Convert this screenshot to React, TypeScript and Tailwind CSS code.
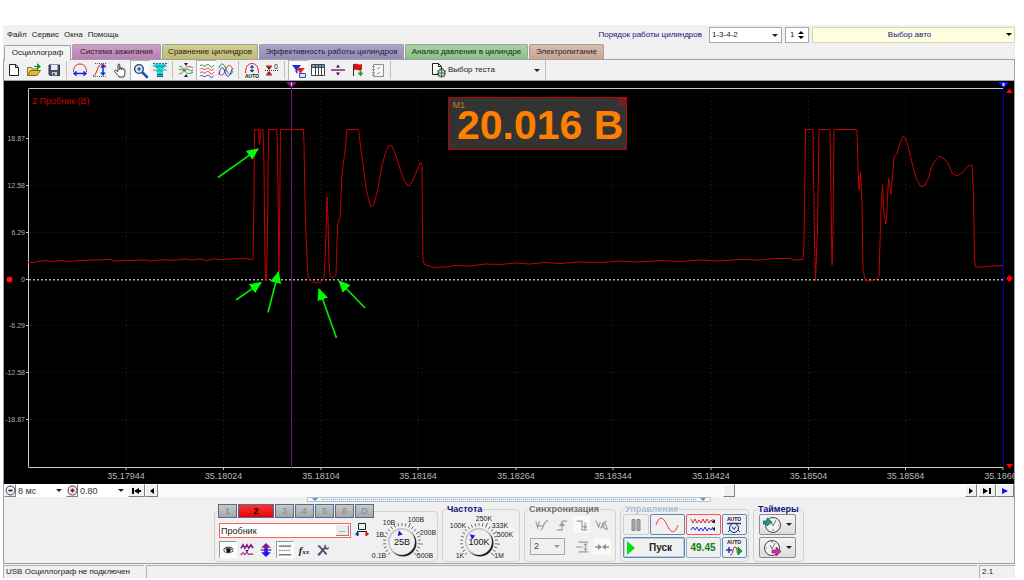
import type { ReactNode } from "react"
import clsx from "clsx"

const tabs = [
    { title: "Осциллограф", style: "w-[67px] bg-[#f4f4f4] h-4 -mb-px" },
    { title: "Система зажигания", style: "w-[89px] bg-linear-to-b from-[#cfa0ca] to-[#bb7db4]" },
    { title: "Сравнение цилиндров", style: "w-[96px] bg-linear-to-b from-[#d0ce94] to-[#bfbc70]" },
    { title: "Эффективность работы цилиндров", style: "w-[145px] bg-linear-to-b from-[#aaa6cb] to-[#918bb9]" },
    { title: "Анализ давления в цилиндре", style: "w-[123px] bg-linear-to-b from-[#a8d3a4] to-[#88c184]" },
    { title: "Электропитание", style: "w-[75px] bg-linear-to-b from-[#d8bcae] to-[#c9a693]" },
]

const Icon = ({ children, className = "w-4 h-4" }: { children: ReactNode; className?: string }) => (
    <svg viewBox="0 0 16 16" className={className} fill="none" aria-hidden="true">
        {children}
    </svg>
)

const Caret = ({ className = "" }: { className?: string }) => (
    <svg viewBox="0 0 6 3" className={clsx("w-[6px] h-[3px] pointer-events-none", className)} aria-hidden="true">
        <path d="M0 0h6L3 3z" fill="currentColor" />
    </svg>
)

const toolGroups: { label: string; pressed?: boolean; icon: ReactNode }[][] = [
    [
        { label: "Новый", icon: <path d="M3.500 2.500h6l3 3v8h-9zM9.500 2.500v3h3" stroke="#222" fill="#fff" /> },
        {
            label: "Открыть",
            icon: (
                <>
                    <path d="M1.500 13V5.500h4l1 1.500h5v2" fill="#f2d77c" stroke="#8a7420" />
                    <path d="M1.500 13.500l3-5h10l-3.500 5z" fill="#e0b93c" stroke="#7d6a1c" />
                    <path d="M11 1l4 3.500L11 8z" fill="#0b9a1f" />
                    <path d="M8 4.500h3" stroke="#0b9a1f" />
                </>
            ),
        },
        {
            label: "Сохранить",
            icon: (
                <>
                    <path d="M3 3h10.500v10.500H4L3 12.500z" fill="#4b5064" stroke="#2f3344" />
                    <path d="M5 3h6.500v5H5z" fill="#e8ecf4" />
                    <path d="M6 10h5v3.500H6z" fill="#c8ccd6" />
                    <path d="M7 11h1.500v2.500H7z" fill="#333" />
                </>
            ),
        },
    ],
    [
        {
            label: "Период",
            icon: (
                <>
                    <path d="M1.500 10C1.500 5 4 2 8 2s6.500 3 6.500 8" stroke="#e02020" />
                    <path d="M2 11.500h12" stroke="#0b2fd8" strokeWidth="1.500" />
                    <path d="M1 11.500l3.500-3v6zM15 11.500l-3.500-3v6z" fill="#0b2fd8" />
                </>
            ),
        },
        {
            label: "Амплитуда",
            icon: (
                <>
                    <path d="M1 14c4 0 4-12 9-12 2 0 3 1 4 3" stroke="#e02020" />
                    <path d="M3 1.500h12M1 14.500h14" stroke="#555" strokeDasharray="1 1" />
                    <path d="M11 3v10" stroke="#0b2fd8" strokeWidth="1.500" />
                    <path d="M11 2l3 3.500H8zM11 14l3-3.500H8z" fill="#0b2fd8" />
                </>
            ),
        },
        {
            label: "Рука",
            icon: (
                <path
                    d="M6 9.500V3c0-1.300 1.800-1.300 1.800 0v4.500V6.300c0-1 1.700-1 1.700.2v1-.8c0-1 1.700-1 1.700.3v.8c0-1 1.700-.9 1.700.3V11c0 2-1 2.500-1 4H7c0-1.500-3.500-3.500-4.300-5.500-.4-1.200.9-1.700 1.700-.8z"
                    fill="#fff"
                    stroke="#222"
                    strokeWidth=".9"
                />
            ),
        },
        {
            label: "Лупа",
            pressed: true,
            icon: (
                <>
                    <path d="M9.500 9.500l4.500 4.500" stroke="#2450b0" strokeWidth="2.600" strokeLinecap="round" />
                    <circle cx="6" cy="6" r="4.300" fill="#cfe9f5" stroke="#283c66" strokeWidth="1.300" />
                    <path d="M4 6h4M6 4v4" stroke="#0d3f8c" />
                </>
            ),
        },
        {
            label: "Фильтр",
            icon: (
                <>
                    <path d="M2 2h12l-3 6v6H5V8z" fill="#18dcec" />
                    <path d="M1 4.500c2-2 3 2 5 0s3 2 5 0 3 0 4 0" stroke="#0c6d6a" />
                    <path d="M1 8.500c2-2 3 2 5 0s3 2 5 0 3 0 4 0" stroke="#2c9a5a" />
                    <path d="M1 1.500h14" stroke="#0a6f88" strokeDasharray="2 1" />
                    <path d="M5 12.500h6M5 14.500h6" stroke="#0a5070" />
                </>
            ),
        },
    ],
    [
        {
            label: "Совместить",
            icon: (
                <>
                    <path d="M1 5c2-2 3 0 5 3s4 5 9 2" stroke="#1c9440" />
                    <path d="M1 11c2 2 3 0 5-3s4-5 9-2" stroke="#d23a3a" />
                    <path d="M1 8c3-3 4 3 7 0s4 3 7 0" stroke="#1c9440" />
                    <path d="M6 1h4L8 4zM6 15h4l-2-3z" fill="#222" />
                </>
            ),
        },
        {
            label: "Раздельно",
            pressed: true,
            icon: (
                <>
                    <path d="M1 3c2-3 3 1 5 0s3-3 5 0 3 0 4-1" stroke="#14903c" />
                    <path d="M1 6.500c2-3 3 1 5 0s3-2 5 0 3 0 4-1" stroke="#e03030" />
                    <path d="M1 10c2-3 3 1 5 0s3-3 5 0 3 0 4-1" stroke="#e03030" />
                    <path d="M1 13.500c2-3 3 1 5 0s3-2 5 0 3 0 4-1" stroke="#1d36d0" />
                </>
            ),
        },
        {
            label: "Наложить",
            icon: (
                <>
                    <path d="M1 6c2-6 5-5 7 1s5 7 7 2" stroke="#14903c" />
                    <path d="M1 10c2 5 4 4 6-1s5-9 8-1" stroke="#e03030" />
                    <path d="M1 13c1-8 4-10 6-3s5 5 7-3" stroke="#1d36d0" />
                </>
            ),
        },
    ],
    [
        {
            label: "Авто",
            icon: (
                <>
                    <path d="M1.500 11C1.500 5 4 1.500 8 1.500S14.500 5 14.500 11" stroke="#e02020" />
                    <path d="M8 4v6" stroke="#123c8e" />
                    <path d="M8 3l2.500 2.500h-5zM8 10.500L10.500 8h-5z" fill="#123c8e" />
                    <text x="8" y="15.500" textAnchor="middle" fontSize="5" fontWeight="bold" fill="#111">
                        AUTO
                    </text>
                </>
            ),
        },
        {
            label: "Ноль",
            icon: (
                <>
                    <path d="M1 8.500h14" stroke="#333" strokeDasharray="1 1" />
                    <path d="M2 4.500h6L5 8zM2 12.500h6L5 9z" fill="#a01010" />
                    <path d="M2 4h6M2 13h6" stroke="#a01010" />
                    <text x="10" y="7" fontSize="7" fill="#222">
                        0
                    </text>
                </>
            ),
        },
    ],
    [
        {
            label: "Фильтр каналов",
            pressed: true,
            icon: (
                <>
                    <path d="M1 2h9L6.500 6.500V11L4.500 9V6.500z" fill="#1b2be0" />
                    <path d="M5 5h9l-3.500 4v4.500L8.500 12V9z" fill="#e01c24" />
                    <path d="M8.500 10.500h6v4h-6z" fill="#dfe6ff" stroke="#3949ab" />
                </>
            ),
        },
        {
            label: "Таблица",
            icon: (
                <>
                    <path d="M1.500 2.500h13v11h-13z" fill="#fff" stroke="#444" />
                    <path d="M2 3h12v2H2z" fill="#6ea0d4" />
                    <path d="M2 5.500h12M5.500 3v10M8.500 3v10M11.500 3v10" stroke="#444" />
                </>
            ),
        },
        {
            label: "Линия",
            icon: (
                <>
                    <path d="M1 8h14" stroke="#8b1a8b" strokeWidth="1.500" />
                    <path d="M6 5.500h4l-2-3zM6 10.500h4l-2 3z" fill="#222" />
                </>
            ),
        },
        {
            label: "Метка",
            icon: (
                <>
                    <path d="M3.500 2v12" stroke="#333" />
                    <path d="M4 2c3-1 4 1.500 8 0v6c-4 1.500-5-1-8 0z" fill="#d01418" />
                    <path d="M8 11.500h5M10.500 9v5" stroke="#12962a" strokeWidth="1.600" />
                </>
            ),
        },
        {
            label: "Отчёт",
            icon: (
                <>
                    <path d="M3.500 2.500h10v12h-10z" fill="#f6f6f6" stroke="#8d8d8d" />
                    <path d="M2 4.500h3M2 7.500h3M2 10.500h3M2 13h3M7 6l1 1 2-2M7 11l1 1 2-2" stroke="#9a9a9a" />
                </>
            ),
        },
    ],
]

const gridX = [126, 223.5, 321, 418, 516, 613, 711, 808.5, 905.5, 1003]
const timeLabels = ["35.17944", "35.18024", "35.18104", "35.18184", "35.18264", "35.18344", "35.18424", "35.18504", "35.18584", "35.18664"]
const levels = [
    { y: 139, label: "18.87" },
    { y: 186, label: "12.58" },
    { y: 233, label: "6.29" },
    { y: 280, label: "0" },
    { y: 326, label: "-6.29" },
    { y: 373, label: "-12.58" },
    { y: 420, label: "-18.87" },
]

const wave =
    "28,262.500 34,262.500 36,261.500 46,260.500 51,261.500 62,260.500 68,261.500 80,260.500 110,259.500 115,261 125,260.500 145,260 150,261 165,259.500 172,260.500 185,259 192,260 200,259 207,260.500 213,259 222,259.500 245,258.500 250,259.500 253,259.500 254,195 254.500,129.500 258.500,129.500 259.500,144.500 261,130 263,129.500 264,166 265,260 265.500,280.500 266.500,278 267.500,230 268.500,129.500 276.500,129.500 277.500,145 278.500,235 279,272 279.500,235 280.500,129.500 303.500,129.500 304,143 305,200 306,236 308,276 310,280 313,282 317,283 321,282 324,278 325.500,250 326.500,215 327,197 328,217 329,262 330,276 333,278 336,275 337.500,225 340,217 342,175 343,165 345,152 347,129.500 358.500,129.500 361,150 364,172 366,188 369,201 371,207 374,204 378,188 382,165 386,151 389,145.500 392,146 396,156 402,175 406,184 409,186 413,180 418,168 420.500,162 422,165 422.500,225 423,261 425,265 430,266 434,268 440,267 446,267 455,265.500 470,266 485,264 500,264.500 515,263 530,264 545,262.500 560,263.500 580,262 600,262.500 620,261 640,262 660,260.500 680,261.500 700,260 720,261 740,259.500 760,260 775,258.500 790,258.500 793,260 803,259.500 804,243 805.500,129.500 813,129.500 814.500,242 815.500,281 817.500,228 819,129.500 830,129.500 831.500,230 832,265 833,230 834,129.500 857,129.500 858,167 859,190 860.500,172 862,203 863,270 865,279 869,281 875,280 879,277 880,242 881,210 882.500,184 884,215 886,224 887,210 888.500,178 891,195 893,170 894,157 897,154 900,143 903,136 905,138 908,146 912,163 916,178 921,187 925,185 929,177 931,168 935,161 939,156 943,158 948,163 952,173 957,176 963,172 968,166 972,165 973.500,195 974.500,260 975.500,267 982,267 992,266 1003,265.500"

const arrows = [
    [218, 177.5, 258, 149],
    [236, 300, 261, 282.5],
    [268, 312.5, 278.5, 272],
    [336.5, 338, 319, 289],
    [365, 308, 339, 281],
]

const Scope = () => (
    <div className="relative bg-black border-x border-[#a0a0a0]">
        <svg viewBox="4 81 1010 403" className="block w-full h-auto" role="img" aria-label="Осциллограмма">
            <defs>
                <marker id="tip" markerUnits="userSpaceOnUse" markerWidth="12" markerHeight="12" refX="11" refY="5.500" orient="auto">
                    <path d="M0 0L12 5.500L0 11z" fill="#00ff00" />
                </marker>
            </defs>
            <g stroke="#26260c" strokeDasharray="1 3">
                {gridX.slice(0, 9).map((x) => (
                    <line key={x} x1={x} x2={x} y1="92" y2="466" />
                ))}
                {levels.map((l) => (
                    <line key={l.y} x1="30" x2="1002" y1={l.y - 0.5} y2={l.y - 0.5} />
                ))}
            </g>
            <path d="M28.500 467.500V88.500H1003M28.500 467.500H1003" stroke="#c8c8c8" fill="none" />
            <line x1="29" x2="1003" y1="279.750" y2="279.750" stroke="#a8a8a8" strokeWidth="1.500" strokeDasharray="2 2" />
            <g fontSize="7" fill="#b0b0b0">
                {levels.map((l) => (
                    <text key={l.label} x="25" y={l.y + 2} textAnchor="end">
                        {l.label}
                    </text>
                ))}
            </g>
            <g fontSize="9" fill="#b8b8b8">
                {timeLabels.map((t, i) => (
                    <text key={t} x={gridX[i]} y="479" textAnchor="middle">
                        {t}
                    </text>
                ))}
            </g>
            <g stroke="#c8c8c8">
                {levels.map((l) => (
                    <line key={l.y} x1="26" x2="28" y1={l.y - 0.5} y2={l.y - 0.5} />
                ))}
                {gridX.map((x) => (
                    <line key={x} x1={x} x2={x} y1="468" y2="470" />
                ))}
            </g>
            <text x="32" y="104" fontSize="9" fill="#d00000">
                2 Пробник (В)
            </text>
            <polyline points={wave} fill="none" stroke="#c40000" strokeLinejoin="round" />
            <path d="M291.500 84V468" stroke="#6a1a6e" />
            <path d="M286 82h11l-5.500 6z" fill="#8a108c" />
            <path d="M291.500 82.500v3" stroke="#fff" />
            <path d="M1003.500 84V468" stroke="#0000c0" />
            <path d="M998 82h11l-5.500 6z" fill="#1414ff" />
            <path d="M1002.500 83h2v3h-2z" fill="#c8d0ff" />
            <path d="M1006 93l3.500-4.500L1013 93zM1006 464l3.500 4.500L1013 464zM1009.500 275l3.500 3.500-3.500 3.500-3.500-3.500z" fill="#ff0000" />
            <circle cx="9.500" cy="279.500" r="3" fill="#ff1010" />
            {arrows.map(([x1, y1, x2, y2]) => (
                <line key={x1} x1={x1} y1={y1} x2={x2} y2={y2} stroke="#00e800" strokeWidth="1.700" markerEnd="url(#tip)" />
            ))}
        </svg>
        {/* floating meter window */}
        <div className="absolute left-[44%] top-4 w-[179px] h-[53px] bg-[#333] border border-[#c00000] text-[#ff8000]">
            <span className="absolute left-[3px] top-[2px] text-[9px] leading-[10px] text-[#c87820]">М1</span>
            <p className="h-full pr-[3px] text-right text-[41px] leading-[54px] font-bold whitespace-nowrap">20.016 В</p>
            <button aria-label="Закрыть" className="absolute right-0 top-0 w-[7px] h-[7px] text-[#e00000]">
                <svg viewBox="0 0 7 7" className="w-[7px] h-[7px]" fill="none" stroke="currentColor">
                    <path d="M.5.500h6v6h-6zM1 1l5 5M6 1L1 6" strokeWidth=".8" />
                </svg>
            </button>
        </div>
    </div>
)

type Mark = { x: number; y: number; t: string }

const Knob = ({ value, marks, angle, className }: { value: string; marks: Mark[]; angle: number; className: string }) => (
    <svg viewBox="-34 -28 68 46" className={className} role="img" aria-label={value}>
        {Array.from({ length: 23 }, (_, i) => i * 12 - 132).map((a) => (
            <line key={a} y1="-16" y2={a % 36 === 24 ? "-21" : "-19"} transform={`rotate(${a})`} stroke="#555" strokeWidth=".8" />
        ))}
        <circle cx="1" cy="1" r="13.500" fill="#222" />
        <circle cx="-.5" cy="-.5" r="13.500" fill="#c0c0c0" />
        <circle r="12.500" fill="#f0f0f0" />
        <path d="M-2.500-7L0-12 2.500-7z" fill="#1010f0" transform={`rotate(${angle})`} />
        <text y="3" textAnchor="middle" fontSize="9" fill="#111">
            {value}
        </text>
        {marks.map((m) => (
            <text key={m.t} x={m.x} y={m.y} textAnchor="middle" fontSize="7" fill="#222">
                {m.t}
            </text>
        ))}
    </svg>
)

const voltMarks: Mark[] = [
    { x: -23, y: 16, t: "0.1В" },
    { x: -22, y: -5, t: "1В" },
    { x: -13, y: -17, t: "10В" },
    { x: 14, y: -20, t: "100В" },
    { x: 26, y: -7, t: "200В" },
    { x: 23, y: 16, t: "500В" },
]

const freqMarks: Mark[] = [
    { x: -19, y: 16, t: "1K" },
    { x: -21, y: -14, t: "100K" },
    { x: 5, y: -21, t: "250K" },
    { x: 21, y: -14, t: "333K" },
    { x: 26, y: -5, t: "500K" },
    { x: 20, y: 16, t: "1M" },
]

const Group = ({ title, color, className, children }: { title: string; color: string; className: string; children: ReactNode }) => (
    <fieldset className={clsx("shrink-0 border border-[#d2d2d2] rounded-sm", className)}>
        <legend className={clsx("ml-1 text-[9px] leading-[10px] font-bold", color)}>{title}</legend>
        {children}
    </fieldset>
)

const channelTools: { label: string; pressed?: boolean; icon: ReactNode }[] = [
    {
        label: "Видимость",
        pressed: true,
        icon: (
            <>
                <path d="M3 9c3-4 7-4 11 0-4 3-8 3-11 0z" fill="#fff" stroke="#333" />
                <circle cx="8.500" cy="8.500" r="2.500" fill="#111" />
                <path d="M3 7c3-3 8-3 11 0" stroke="#111" />
            </>
        ),
    },
    {
        label: "Сглаживание",
        icon: (
            <>
                <path d="M1 6l2.500-4 2 4 2.500-4 2 4 2.500-4L15 6" stroke="#8a1a8a" strokeWidth="1.800" />
                <path d="M6 8h4l-2 2.500z" fill="#222" />
                <path d="M1 14c2-5 3-2 4-1s2-4 4-1 3-1 6 1" stroke="#8a1a8a" strokeWidth="1.300" />
            </>
        ),
    },
    {
        label: "Инверсия",
        icon: (
            <>
                <path d="M8 0l5.500 5.500H10V8H6V5.500H2.500z" fill="#8a1a8a" />
                <path d="M8 16l5.500-5.500H10V8H6v2.500H2.500z" fill="#1414f0" />
                <path d="M2 8h12" stroke="#4a18c0" strokeWidth="1.500" />
            </>
        ),
    },
    {
        label: "Границы",
        pressed: true,
        icon: (
            <>
                <path d="M1 3.500h14M1 13.500h14" stroke="#222" />
                <path d="M1 8.500h14" stroke="#444" strokeDasharray="1 1" />
            </>
        ),
    },
    {
        label: "Функция",
        icon: (
            <text x="2" y="12" fontSize="12" fontStyle="italic" fontWeight="bold" fontFamily="Liberation Serif, serif" fill="#111">
                f<tspan fontSize="8">xx</tspan>
            </text>
        ),
    },
    {
        label: "Настройки",
        icon: (
            <>
                <path d="M3 13.500l7-8M4 4l8 9" stroke="#444a58" strokeWidth="2" />
                <path d="M9 5c0-3 2-3 3-3l-1 2 1.500 1.500L15 4.500c0 2-2 4-4 3M2 2l3 1 1 3-3-1z" fill="#555c6c" />
                <path d="M2.500 14l3-3" stroke="#3a62b4" strokeWidth="2.500" />
            </>
        ),
    },
]

const syncIcons = [
    { label: "Автосинхронизация", d: "M1 4l2 7 2-7M6 14c4 0 3-11 9-11M4 9h6", pressed: false },
    { label: "По фронту", d: "M2 13.500h6V3.500h6M5 8.500h6M8 6l-3 3M8 6l3 3", pressed: false },
    { label: "По спаду", d: "M2 3.500h6v10h6M11.500 5v6M9.500 9l2 3 2-3", pressed: true },
    { label: "Вручную", d: "M1 3l3 7 2-5M7 12L13 3M8 7l2-2 3 4 1 4-3-1zM5 10h5", pressed: false },
]

const plainButton = "flex items-center justify-center rounded-xs border h-[21px]"

const Controls = () => (
    <div className="flex justify-center gap-1">
        <fieldset className="shrink-0 w-[224px] h-[58px] border border-[#d2d2d2] rounded-sm">
            <legend className="ml-[3px] flex gap-px">
                {["1", "2", "3", "4", "5", "6", "D"].map((c) => (
                    <button
                        key={c}
                        className={clsx(
                            "h-[14px] border border-[#4e7192] text-[9px] leading-3",
                            c === "2"
                                ? "w-[36px] bg-linear-to-b from-[#ff3030] to-[#e00000] text-black font-bold"
                                : "w-[19px] bg-linear-to-b from-[#c8c8c8] to-[#a8a8a8] text-[#858585]"
                        )}
                    >
                        {c}
                    </button>
                ))}
            </legend>
            <div className="flex items-start -mt-1">
                <div className="flex flex-col pl-1 pt-[9px] gap-[3px]">
                    <div className="flex items-center gap-[3px]">
                        <div className="flex w-[132px] h-[15px] border border-[#ff6060] bg-white">
                            <input aria-label="Название канала" defaultValue="Пробник" className="min-w-0 flex-1 pl-px text-[9px] leading-3 outline-none" />
                            <button aria-label="Обзор" className="w-[13px] m-px bg-[#ececec] border-r border-b border-[#888] text-[8px] leading-[6px]">
                                ...
                            </button>
                        </div>
                        <button aria-label="Щуп" className="w-4 h-4 -mt-px">
                            <Icon>
                                <path d="M4.500 1.500h7v6h-7zM3 9.500h10" stroke="#222" fill="#e8f4e4" />
                                <path d="M5 12H2M4 10l-2.500 2L4 14z" stroke="#1c2cb4" fill="#1c2cb4" />
                                <path d="M11 12h3M12 10l2.500 2-2.500 2z" stroke="#e01818" fill="#e01818" />
                            </Icon>
                        </button>
                    </div>
                    <div className="flex gap-px">
                        {channelTools.map((t) => (
                            <button
                                key={t.label}
                                aria-label={t.label}
                                className={clsx(
                                    "flex items-center justify-center w-[18px] h-[17px] border",
                                    t.pressed ? "bg-[#fafafa] border-t-[#9a9a9a] border-l-[#9a9a9a] border-white" : "border-transparent"
                                )}
                            >
                                <Icon className="w-[14px] h-[14px] shrink-0">{t.icon}</Icon>
                            </button>
                        ))}
                    </div>
                </div>
                <Knob value="25В" marks={voltMarks} angle={-15} className="w-[68px] h-[46px] -ml-[2px]" />
            </div>
        </fieldset>

        <Group title="Частота" color="text-[#101080]" className="w-[78px]">
            <Knob value="100K" marks={freqMarks} angle={-50} className="w-[72px] h-[46px]" />
        </Group>

        <Group title="Синхронизация" color="text-[#6e6e6e]" className="w-[92px]">
            <div className="flex justify-between pl-2 pr-[5px] pt-[2px]">
                {syncIcons.map((s) => (
                    <button key={s.label} aria-label={s.label} className={clsx("w-[17px] h-[17px] flex items-center justify-center", s.pressed && "bg-[#f9f9f9]")}>
                        <Icon className="w-[14px] h-[14px]">
                            <path d={s.d} stroke="#9c9c9c" strokeWidth="1.300" />
                        </Icon>
                    </button>
                ))}
            </div>
            <div className="flex items-center pl-[5px] pr-1 pt-[5px]">
                <div className="relative w-[35px]">
                    <select aria-label="Канал синхронизации" className="appearance-none block w-full h-[17px] border border-[#a8a8a8] pl-[3px] text-[9px] text-[#444]">
                        <option>2</option>
                    </select>
                    <Caret className="absolute right-[5px] top-[7px] text-[#999]" />
                </div>
                <button aria-label="Уровень" className="ml-auto w-[17px] h-[17px] flex items-center justify-center">
                    <Icon className="w-[14px] h-[14px]">
                        <path d="M4 2.500h11M1 8h8M4 13.500h11M12 4v8" stroke="#9c9c9c" strokeWidth="1.300" />
                        <path d="M9.500 6h5L12 3.500zM9.500 10h5L12 12.500z" fill="#9c9c9c" />
                    </Icon>
                </button>
                <button aria-label="Сжать" className="ml-[3px] w-[18px] h-[17px] flex items-center justify-center bg-[#f9f9f9]">
                    <Icon className="w-[14px] h-[14px]">
                        <path d="M0 8h6M16 8h-6" stroke="#909090" strokeWidth="1.500" />
                        <path d="M3.500 4.500L8 8l-4.500 3.500zM12.500 4.500L8 8l4.500 3.500z" fill="#909090" />
                    </Icon>
                </button>
            </div>
        </Group>

        <Group title="Управление" color="text-[#a4bcd4]" className="w-[129px]">
            <div className="grid grid-cols-[26px_35px_35px_25px] justify-center gap-x-px gap-y-[2px]">
                <button aria-label="Пауза" className={clsx(plainButton, "border-[#cfcfcf]")}>
                    <Icon>
                        <path d="M4 2.500h3v11H4zM9 2.500h3v11H9z" fill="#a8a8a8" stroke="#888" />
                    </Icon>
                </button>
                <button aria-label="Синус" className={clsx(plainButton, "border-[#6486a8]")}>
                    <svg viewBox="0 0 24 16" className="w-6 h-4" fill="none" stroke="#f03030">
                        <path d="M1 8C4-1 8-1 12 8s8 9 11 0" />
                    </svg>
                </button>
                <button aria-label="Сигналы" className={clsx(plainButton, "border-[#ff5050]")}>
                    <svg viewBox="0 0 26 16" className="w-[26px] h-4" fill="none">
                        <path d="M1 2l2 4 2-4 2 4 2-3 2 3 2-4 2 4 2-4 2 4 2-3 2 3V2" stroke="#e02828" />
                        <path d="M1 13l2-3 2 3 2-3 2 4 2-3 2 3 2-4 2 4 2-3 2 2 2-3" stroke="#2828d8" />
                        <path d="M22 4.500l3-2v4zM22 12l3-2v4z" fill="#101060" />
                    </svg>
                </button>
                <button aria-label="Автомасштаб" className={clsx(plainButton, "border-[#6486a8]")}>
                    <svg viewBox="0 0 20 18" className="w-5 h-[18px]" fill="none">
                        <text x="10" y="5" textAnchor="middle" fontSize="5" fontWeight="bold" fill="#111">
                            AUTO
                        </text>
                        <path d="M3 7.500h14" stroke="#2030d0" strokeWidth="1.500" />
                        <circle cx="10" cy="12" r="4.500" stroke="#222" fill="#e8ecf8" />
                        <path d="M8 10.500l2 3 2-3M4 16l2-2M16 16l-2-2" stroke="#2030d0" />
                    </svg>
                </button>
                <button className={clsx(plainButton, "col-span-2 border-[#6486a8] text-[10px] font-bold gap-[14px] pr-2 shadow-[inset_0_0_0_1px_#b4cce4]")}>
                    <svg viewBox="0 0 8 14" className="w-2 h-[14px]" aria-hidden="true">
                        <path d="M0 0l8 7-8 7z" fill="#00e010" />
                    </svg>
                    Пуск
                </button>
                <output className={clsx(plainButton, "border-[#88b0d8] text-[10px] font-bold text-[#108010]")}>49.45</output>
                <button aria-label="Автозапуск" className={clsx(plainButton, "border-[#6486a8]")}>
                    <svg viewBox="0 0 20 18" className="w-5 h-[18px]" fill="none">
                        <text x="10" y="5" textAnchor="middle" fontSize="5" fontWeight="bold" fill="#111">
                            AUTO
                        </text>
                        <path d="M2 11h6M5 8v6" stroke="#2030d0" strokeWidth="1.500" />
                        <path d="M6 16c4 0 2-8 5-8s1 7 4 7" stroke="#a02020" />
                        <path d="M14 8l4 4-4 4z" fill="#10b020" stroke="#084" />
                    </svg>
                </button>
            </div>
        </Group>

        <Group title="Таймеры" color="text-[#101080]" className="w-[51px]">
            <div className="flex flex-col items-center gap-[2px] -ml-[2px]">
                <button aria-label="Таймер запуска" className={clsx(plainButton, "w-[37px] gap-[5px] border-[#8c8c8c] bg-linear-to-b from-[#f4f4f4] to-[#dcdcdc]")}>
                    <svg viewBox="0 0 18 18" className="w-[18px] h-[18px]" fill="none">
                        <circle cx="10" cy="9" r="7.500" stroke="#444" fill="#f4f4f4" />
                        <path d="M8 6l2 4 3-6M10 13v2M15 9h1" stroke="#777" />
                        <path d="M0 5h4V2l5 4-5 4V8H0z" fill="#189a94" stroke="#0a4a48" strokeWidth=".6" />
                    </svg>
                    <Caret />
                </button>
                <button aria-label="Таймер остановки" className={clsx(plainButton, "w-[37px] gap-[5px] border-[#8c8c8c] bg-linear-to-b from-[#f4f4f4] to-[#dcdcdc]")}>
                    <svg viewBox="0 0 18 18" className="w-[18px] h-[18px]" fill="none">
                        <circle cx="9" cy="9" r="7.500" stroke="#444" fill="#f4f4f4" />
                        <path d="M7 6l2 4 3-6M9 2v2M3 9h1" stroke="#777" />
                        <path d="M9 11h4V8l5 4.500-5 4.500v-3H9z" fill="#d428a8" stroke="#5c1048" strokeWidth=".6" />
                    </svg>
                    <Caret />
                </button>
            </div>
        </Group>
    </div>
)

const zoomSelects = [
    { label: "Развёртка", value: "8 мс", sign: "M5 8h6", color: "#1c1ca0" },
    { label: "Масштаб", value: "0.80", sign: "M5 8h6M8 5v6", color: "#a01010" },
]

const navButton = "flex items-center justify-center h-[13px] bg-[#f0f0f0] border border-white border-r-[#808080] border-b-[#808080]"

const ScrollRow = () => (
    <div className="flex h-[13px] border-x border-[#a0a0a0] bg-[#fafafa]">
        {zoomSelects.map((z) => (
            <div key={z.label} className="flex">
                <button aria-label={z.label} className={clsx(navButton, "w-3")}>
                    <Icon className="w-[11px] h-[11px] shrink-0">
                        <circle cx="8" cy="8" r="6.500" stroke="#333" strokeWidth="1.300" />
                        <path d={z.sign} stroke={z.color} strokeWidth="2.500" />
                    </Icon>
                </button>
                <div className="relative w-[50px]">
                    <select aria-label={z.label} className="appearance-none block w-full h-[13px] bg-white pl-[2px] text-[9px] leading-3 text-[#333]">
                        <option>{z.value}</option>
                    </select>
                    <Caret className="absolute right-1 top-[5px]" />
                </div>
            </div>
        ))}
        <button aria-label="В начало" className={clsx(navButton, "w-[17px]")}>
            <svg viewBox="0 0 9 6" className="w-[9px] h-[6px]">
                <path d="M0 0h2v6H0zM2 3l5-3v2h2v2H7v2z" />
            </svg>
        </button>
        <button aria-label="Назад" className={clsx(navButton, "w-[13px]")}>
            <svg viewBox="0 0 4 6" className="w-1 h-[6px]">
                <path d="M4 0v6L0 3z" />
            </svg>
        </button>
        <div className="flex-1 flex">
            <button aria-label="Прокрутка" className={clsx(navButton, "w-3 ml-[70%]")} />
        </div>
        <button aria-label="Вперёд" className={clsx(navButton, "w-3 mr-px")}>
            <svg viewBox="0 0 4 6" className="w-1 h-[6px]">
                <path d="M0 0v6l4-3z" />
            </svg>
        </button>
        <button aria-label="В конец" className={clsx(navButton, "w-[18px]")}>
            <svg viewBox="0 0 8 6" className="w-2 h-[6px]">
                <path d="M0 0v6l5-3zM6 0h2v6H6z" />
            </svg>
        </button>
        <button aria-label="Слежение" className={clsx(navButton, "w-[18px]")}>
            <svg viewBox="0 0 6 6" className="w-[6px] h-[6px]">
                <path d="M0 0v6l6-3z" fill="#1010ff" />
            </svg>
        </button>
    </div>
)

export default function App() {
    return (
        <div className="bg-white pt-[25px] pl-[3px] pr-[9px] pb-[3px] font-['Liberation_Sans',sans-serif] text-[8px] text-[#222]">
            <div className="bg-[#f0f0f0]">
                <header className="flex items-center h-[19px]">
                    <nav className="flex gap-[5px] pl-1">
                        {["Файл", "Сервис", "Окна", "Помощь"].map((m) => (
                            <button key={m}>{m}</button>
                        ))}
                    </nav>
                    <div className="ml-auto flex items-center gap-[3px]">
                        <label htmlFor="order" className="mr-1 text-[#141480]">
                            Порядок работы цилиндров
                        </label>
                        <div className="relative w-[73px]">
                            <select id="order" className="appearance-none block w-full h-4 bg-white border border-[#a8a8a8] pl-[2px]">
                                <option>1-3-4-2</option>
                            </select>
                            <Caret className="absolute right-1 top-[7px]" />
                        </div>
                        <div className="flex items-center justify-between w-6 h-4 bg-white border border-[#a8a8a8] pl-1 pr-1">
                            <input aria-label="Номер цилиндра" defaultValue="1" className="w-2 outline-none" />
                            <svg viewBox="0 0 6 10" className="w-[6px] h-[10px]">
                                <path d="M0 4h6L3 1zM0 6h6L3 9z" />
                            </svg>
                        </div>
                        <button className="flex items-center w-[203px] h-4 bg-[#ffffe0] border border-[#d8d8b8] text-[#141480]">
                            <span className="flex-1">Выбор авто</span>
                            <Caret className="mr-[2px] text-black" />
                        </button>
                    </div>
                </header>

                <div role="tablist" className="flex items-end gap-px h-[15px] pl-px">
                    {tabs.map((t, idx) => (
                        <button
                            key={t.title}
                            role="tab"
                            aria-selected={idx === 0}
                            className={clsx("relative shrink-0 h-[15px] whitespace-nowrap border border-b-0 border-[#a0a0a0] rounded-t-xs text-[#222]", t.style)}
                        >
                            {t.title}
                        </button>
                    ))}
                </div>

                <div className="flex items-center h-[22px] border border-[#a0a0a0] bg-[#f1f1f1]">
                    {toolGroups.map((group, idx) => (
                        <div key={idx} className="flex items-center">
                            {group.map((tool) => (
                                <button
                                    key={tool.label}
                                    aria-label={tool.label}
                                    className={clsx("flex items-center justify-center w-5 h-5", tool.pressed && "bg-[#fafafa] border-l border-t border-[#b4b4b4]")}
                                >
                                    <Icon>{tool.icon}</Icon>
                                </button>
                            ))}
                            <span className="w-px h-[18px] ml-[2px] mr-[3px] bg-[#c0c0c0]" />
                        </div>
                    ))}
                    <button className="flex items-center gap-[2px] w-[152px] h-5 pl-9 pr-[5px] border-r border-[#c0c0c0]">
                        <Icon>
                            <path d="M2.500 1.500h6l3 3v8h-9zM8.500 1.500v3h3" stroke="#222" fill="#fff" />
                            <circle cx="11.500" cy="11" r="3.500" fill="#d4e4cc" stroke="#2c4c34" />
                            <circle cx="11.500" cy="11" r="4.400" stroke="#2c4c34" strokeDasharray="1.500 1.500" />
                            <path d="M8 11h7M11.500 7.500v7" stroke="#2c4c34" strokeWidth=".8" />
                        </Icon>
                        <span>Выбор теста</span>
                        <Caret className="ml-auto" />
                    </button>
                </div>

                <Scope />
                <ScrollRow />

                <div className="border-x border-b border-[#a0a0a0] pb-px">
                    <div className="flex items-center justify-between w-2/5 h-[5px] mx-auto mb-[2px] px-1 gap-1 border border-[#b8c4d0] bg-[#f6f6f6]">
                        <Caret className="text-[#4c94e0]" />
                        <span className="flex-1 border-t border-dotted border-[#7aa8dc]" />
                        <Caret className="text-[#4c94e0]" />
                    </div>
                    <Controls />
                </div>

                <footer className="flex gap-[2px] pt-px h-[14px] text-[8px] leading-3">
                    <p className="w-[141px] pl-[2px] border-l border-t border-[#b0b0b0]">USB Осциллограф не подключен</p>
                    <p className="flex-1 border-l border-t border-[#b0b0b0]" />
                    <p className="w-9 pl-[2px] border-l border-t border-[#b0b0b0]">2.1</p>
                </footer>
            </div>
        </div>
    )
}
